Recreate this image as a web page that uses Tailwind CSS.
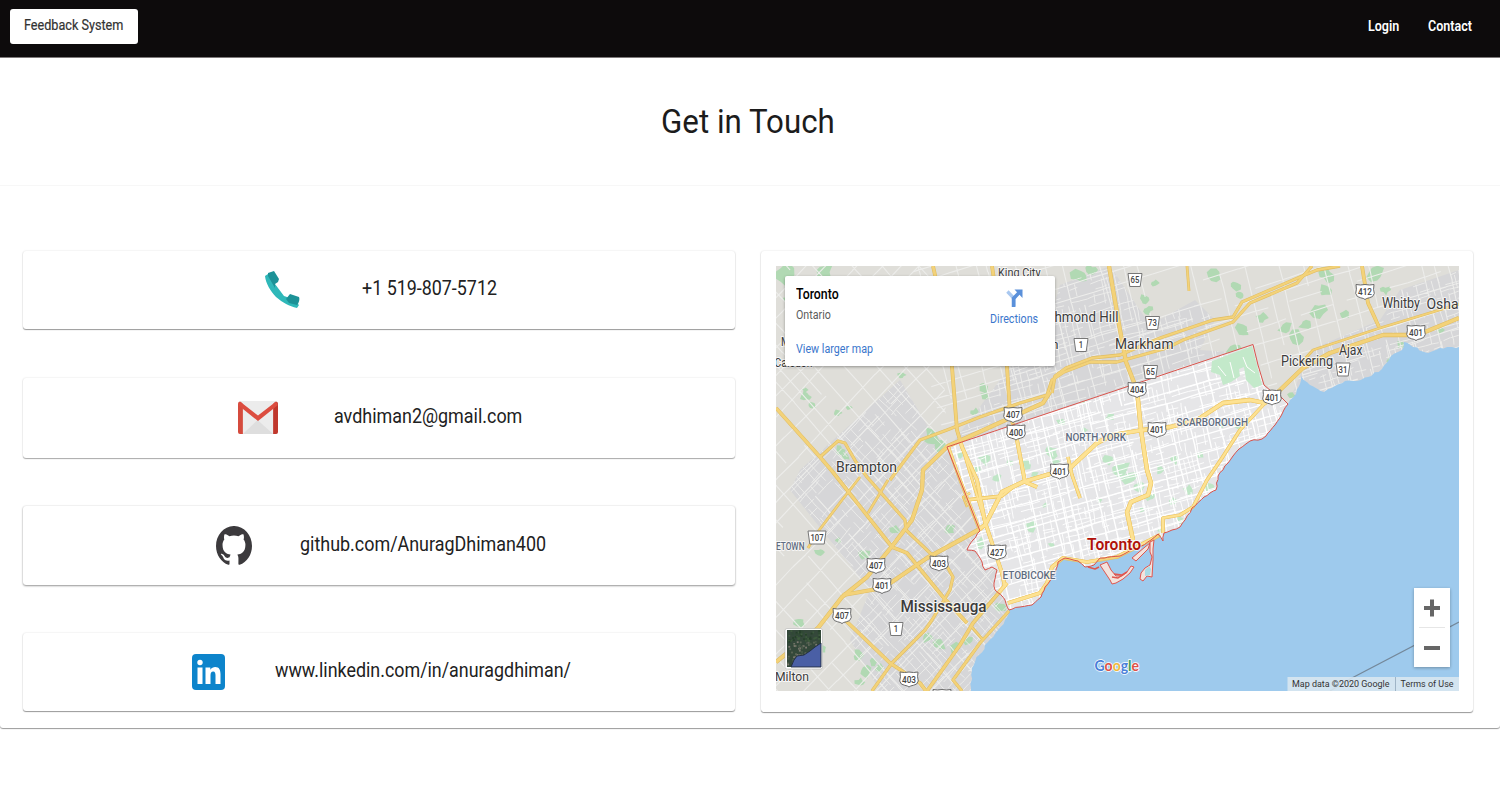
<!DOCTYPE html>
<html lang="en">
<head>
<meta charset="utf-8">
<title>Feedback System</title>
<script src="https://cdn.jsdelivr.net/npm/@tailwindcss/browser@4"></script>
</head>
<body class="h-[800px] overflow-hidden bg-white font-['Roboto',sans-serif] text-[#212121]">
<header class="flex h-[58px] items-start justify-between border-b border-[#7d797a] bg-[#0d0b0c] pl-[10px] pr-[28px] pt-[9px]">
  <a class="flex h-[35px] w-[128px] items-center rounded-[3px] bg-white pb-[3px] pl-[14px] text-sm text-[#333]"><span class="inline-block origin-left scale-x-[.902] whitespace-nowrap [-webkit-text-stroke:.2px_#333]">Feedback System</span></a>
  <nav class="flex h-[33px] items-center gap-[29px] text-sm font-semibold text-white">
    <a class="w-[31px]"><span class="inline-block origin-left scale-x-[.895] whitespace-nowrap">Login</span></a>
    <a class="w-[44px]"><span class="inline-block origin-left scale-x-[.895] whitespace-nowrap">Contact</span></a>
  </nav>
</header>
<main class="h-[670px] rounded-b-[3px] bg-white shadow-[0_1px_1px_#999]">
  <div class="flex h-[128px] items-center justify-center border-b border-[#f7f7f7]">
    <h1 class="-ml-[5px] w-[173px] text-[34px] text-[#1c1c1c]"><span class="inline-block origin-left scale-x-[.92] whitespace-nowrap">Get in Touch</span></h1>
  </div>
  <div class="flex gap-[26px] pl-[23px] pt-[65px]">
    <section class="flex w-[712px] flex-col text-[20px]">
      <div class="flex h-[78px] items-center rounded-[3px] pl-[242px] shadow-[0_1px_1px_#999,0_0_2px_#ddd]">
        <svg class="h-[38px] w-[35px]" viewBox="0 0 35 38"><path d="M3 3 0 5C1 13 5 19 11 26C18 32 24 35 32 37l2-3-6-6-9-3L10 13Z" fill="#2fb8b9"/><path d="m3 2 6-2 5 8-1 3-3 2v4L3 5Z" fill="#1c9297"/><path d="m21 28 4-5 9 3c1 2 0 6-2 8l-8-2Z" fill="#1c9297"/></svg>
        <div class="-mt-[4px] ml-[62px] w-[135px]"><span class="inline-block origin-left scale-x-[.894] whitespace-nowrap">+1 519-807-5712</span></div>
      </div>
      <div class="mt-[49px] flex h-[80px] items-center rounded-[3px] pl-[215px] shadow-[0_1px_1px_#aaa,0_0_2px_#ddd]">
        <svg class="-mt-[2px] h-[33px] w-[40px]" viewBox="0 0 41 33" preserveAspectRatio="none"><rect width="40" height="33" x=".5" rx="2" fill="#ececec"/><path d="M20 19 36 33H5Z" fill="#dedede"/><path d="M0 3q0-3 3-2l2 2v30H2q-2 0-2-2Z" fill="#d54b3d"/><path d="M41 3q0-3-3-2l-2 2v30h3q2 0 2-2Z" fill="#c0372c"/><path d="M2 .5 20.500 14.500 39 .5l2 3.500L20.500 20 0 4Z" fill="#dc4d40"/></svg>
        <div class="-mt-[5px] ml-[56px] w-[188px]"><span class="inline-block origin-left scale-x-[.896] whitespace-nowrap">avdhiman2@gmail.com</span></div>
      </div>
      <div class="mt-[48px] flex h-[79px] items-center rounded-[3px] pl-[193px] shadow-[0_1px_2px_#999,0_0_2px_#ddd]">
        <svg class="-mt-px h-[39px] w-[36px]" viewBox="0 .3 24 23.500" preserveAspectRatio="none"><path fill="#3c3a3d" d="M12 .297c-6.630 0-12 5.373-12 12 0 5.303 3.438 9.800 8.205 11.385.6.113.82-.258.82-.577 0-.285-.01-1.040-.015-2.040-3.338.724-4.042-1.610-4.042-1.610C4.422 18.070 3.633 17.700 3.633 17.700c-1.087-.744.084-.729.084-.729 1.205.084 1.838 1.236 1.838 1.236 1.070 1.835 2.809 1.305 3.495.998.108-.776.417-1.305.76-1.605-2.665-.3-5.466-1.332-5.466-5.930 0-1.310.465-2.380 1.235-3.220-.135-.303-.54-1.523.105-3.176 0 0 1.005-.322 3.300 1.230.96-.267 1.980-.399 3-.405 1.020.006 2.040.138 3 .405 2.280-1.552 3.285-1.230 3.285-1.230.645 1.653.24 2.873.12 3.176.765.84 1.230 1.910 1.230 3.220 0 4.610-2.805 5.625-5.475 5.920.42.36.81 1.096.81 2.220 0 1.606-.015 2.896-.015 3.286 0 .315.21.69.825.57C20.565 22.092 24 17.592 24 12.297c0-6.627-5.373-12-12-12"/></svg>
        <div class="-mt-[4px] ml-[48px] w-[246px]"><span class="inline-block origin-left scale-x-[.896] whitespace-nowrap">github.com/AnuragDhiman400</span></div>
      </div>
      <div class="mt-[48px] flex h-[78px] items-center rounded-[3px] pl-[169px] shadow-[0_1px_1px_#999,0_0_2px_#ddd]">
        <svg class="h-[36px] w-[33px]" viewBox="0 0 33 36"><rect width="33" height="36" rx="4" fill="#0d84cb"/><circle cx="8" cy="8.500" r="2.700" fill="#fff"/><path d="M5.500 13.500h5V30h-5zM13.500 13.500h4.800v2.300c1.200-2 3-2.800 4.900-2.800 4 0 5.300 2.800 5.300 7V30h-5v-8.500c0-2.300-.4-4-2.300-4s-2.700 1.500-2.700 4V30h-5z" fill="#fff"/></svg>
        <div class="-mt-[4px] ml-[50px] w-[296px]"><span class="inline-block origin-left scale-x-[.894] whitespace-nowrap">www.linkedin.com/in/anuragdhiman/</span></div>
      </div>
    </section>
    <section class="h-[461px] w-[712px] rounded-[3px] pl-[15px] pt-[15px] shadow-[0_1px_1px_#999,0_0_2px_#ddd]">
      <div class="relative h-[425px] w-[683px] overflow-hidden">
        <svg id="map" class="block h-[425px] w-[683px]" viewBox="776 266 683 425"></svg>
        <div class="absolute left-[9px] top-[10px] flex h-[90px] w-[270px] justify-between rounded-[2px] bg-white pl-[11px] pr-[17px] shadow-[0_1px_3px_rgba(0,0,0,.35)]">
          <div class="flex flex-col pt-[9px] text-xs">
            <b class="h-[21px] w-[43px] text-sm leading-[18px] font-medium text-black"><span class="inline-block origin-left scale-x-[.88] whitespace-nowrap">Toronto</span></b>
            <span class="h-[34px] w-[35px] leading-[18px] text-[#5b5b5b]"><span class="inline-block origin-left scale-x-[.89] whitespace-nowrap">Ontario</span></span>
            <a class="w-[77px] leading-[18px] text-[#3a76cc]"><span class="inline-block origin-left scale-x-[.893] whitespace-nowrap">View larger map</span></a>
          </div>
          <div class="flex w-[48px] flex-col items-center pt-[13px] text-xs text-[#3a76cc]">
            <svg class="h-[18px] w-[17px]" viewBox="0 0 18 18" preserveAspectRatio="none"><path d="m1.500 2.500 7 7v8" fill="none" stroke="#a9c8f0" stroke-width="3.500"/><path d="M8 18V9.500L14 3.500" fill="none" stroke="#5a90da" stroke-width="3.800"/><path d="M9 .5h8.500V9z" fill="#5a90da"/></svg>
            <a class="w-[48px] leading-[24px]"><span class="inline-block origin-left scale-x-[.893] whitespace-nowrap">Directions</span></a>
          </div>
        </div>
        <div class="absolute left-[638px] top-[322px] h-[79px] w-[36px] bg-white shadow-[0_1px_3px_rgba(0,0,0,.3)]">
          <svg class="h-[79px] w-[36px]" viewBox="0 0 36 79"><path d="M10 20h16M18 11.500v17M10 60h16" stroke="#666" stroke-width="4"/><path d="M5 39.500h26" stroke="#e6e6e6"/></svg>
        </div>
      </div>
    </section>
  </div>
</main>
<script>
const map = document.getElementById('map');
let seed = 11;
const rnd = () => (seed = (seed * 16807) % 2147483647) / 2147483647;
// Splits every long edge of a shoreline with small offsets
function rough(str, amp) {
  const p = str.split(' ').map(q => q.split(',').map(Number)), out = [p[0].join(',')];
  for (let i = 1; i < p.length; i++) {
    const [x0, y0] = p[i - 1], [x1, y1] = p[i], n = Math.max(1, Math.round(Math.hypot(x1 - x0, y1 - y0) / 4));
    for (let k = 1; k < n; k++) out.push((x0 + (x1 - x0) * k / n + (rnd() - 0.5) * amp).toFixed(1) + ',' + (y0 + (y1 - y0) * k / n + (rnd() - 0.5) * amp).toFixed(1));
    out.push(p[i].join(','));
  }
  return out.join(' ');
}
const CITY = '947,447 1253,344.5 1258,365 1264,385 1271,391 1281,397 1288,404';
const SHORE = rough('1288,404 1282,414 1275,425 1266,436 1262,439 1250,441 1239,449 1233,456 1228,463 1218,476 1216,490 1210,493 1204,497 1192,508 1185,520 1180,527 1172,530 1164,533 1163,541 1158,534 1151,540 1137,548 1120,556 1100,558 1094,565 1085,567 1078,561 1065,558 1058,562 1055,572 1050,581 1045,587 1041,597 1032,605 1020,607 1009,610', 1.2);
const WEST = rough('1009,610 1005,600 995,590 994,583 997,570 992,567 985,570 982,562 975,551 967,550 973,540 980,531', 1.8);
const EAST = rough('1459,347 1440,348 1428,353 1413,347 1404,342 1402,350 1391,356 1382,369 1368,377 1357,381 1345,381 1335,386 1324,392 1310,385 1301,376 1300,384 1296,394 1290,400', 2);
const city = CITY + ' ' + SHORE + ' ' + WEST;
const lake = EAST + ' ' + SHORE + ' ' + rough('1009,611 1005,620 998,630 988,642 979,655 972,668 971,691', 2) + ' 1459,691';
const urbanW = '800,470 850,425 900,380 930,430 947,447 980,531 1010,610 975,691 880,691 850,640 870,590 830,540 790,490';
const urbanN = '950,446 985,400 1000,380 1050,320 1060,285 1110,266 1150,325 1195,300 1215,320 1200,350 1230,352';
const urbanE = '1290,400 1310,350 1380,320 1400,290 1459,270 1459,347 1340,390';

function grid(cx, cy, R, a, b, step, prob, len) {
  let d = '';
  for (const [deg, k] of [[a, 1], [b, 1.1]]) {
    const r = deg * Math.PI / 180, c = Math.cos(r), s = Math.sin(r);
    for (let t = -R; t < R; t += step * k * (0.6 + rnd() * 0.8)) {
      let w = 0;
      for (let u = -R; u < R;) {
        const l = len * (0.5 + rnd()), w2 = w + (rnd() - 0.5) * 1.8;
        if (rnd() < prob) d += `M${(cx + u * c - (t + w) * s).toFixed(1)} ${(cy + u * s + (t + w) * c).toFixed(1)}L${(cx + (u + l) * c - (t + w2) * s).toFixed(1)} ${(cy + (u + l) * s + (t + w2) * c).toFixed(1)}`;
        u += l; w = w2 * 0.8;
      }
    }
  }
  return d;
}
function blob(x, y, r) {
  const p = [];
  for (let i = 0; i < 9; i++) { const q = i * Math.PI * 2 / 9, m = r * (0.5 + rnd() * 0.8); p.push((x + m * Math.cos(q)).toFixed(1) + ',' + (y + m * 0.9 * Math.sin(q)).toFixed(1)); }
  return `<polygon points="${p.join(' ')}"/>`;
}
const greensOut = [[785,275,12],[823,272,11],[790,300,6],[806,397,5],[812,405,4],[838,413,4],[849,408,3],[905,290,5],[932,437,10],[940,447,7],[983,386,6],[985,395,5],[840,450,5],[846,457,4],[902,375,4],[805,390,3],[1020,290,5],[1080,276,9],[1092,270,6],[1145,300,6],[1148,310,5],[1215,275,7],[1235,285,6],[1233,350,8],[1242,330,7],[1240,295,5],[1262,318,6],[1285,328,7],[1297,337,8],[1305,325,6],[1318,310,9],[1325,290,7],[1326,275,8],[1376,274,9],[1385,290,5],[1345,315,5],[1400,345,4],[1440,330,4],[1050,305,4],[895,530,5],[865,555,6],[820,552,5],[838,540,3],[927,638,6],[940,645,7],[955,648,6],[968,641,5],[858,655,6],[866,672,7],[880,668,5],[874,662,5],[860,682,5],[1000,607,6],[800,622,6],[950,530,6],[822,650,5],[1292,396,5],[1390,360,4],[975,412,4],[1155,283,4]];
const greensIn = [[1000,415,6],[985,460,6],[998,478,5],[1052,452,7],[1055,462,5],[1025,465,6],[1035,475,4],[1120,470,10],[1130,477,8],[1108,460,7],[1140,487,6],[1150,497,5],[1010,463,4],[980,543,6],[1032,526,6],[1052,545,4],[1110,417,5],[1160,470,5],[1175,460,5],[1200,455,4],[1210,487,5],[1172,502,5],[1188,490,5],[1180,520,4],[1080,400,5],[1062,422,5],[1142,510,3],[1240,425,5],[1222,425,4],[1160,530,3],[1025,573,4],[975,470,5],[1045,505,3],[1100,500,3],[960,455,4],[1085,430,3]];
const hw = [
 [3,'776,408 820,457 832,471 892,547 907,553 943,597 967,623'],[2.500,'820,457 838,441 845,443 856,462 867,477 905,520 906,530 930,553 945,563 953,577 950,590 932,620 925,630 892,663 872,691'],
 [3,'933,266 945,320 952,367 957,430 962,447 977,480 985,522 1002,573 1005,587'],[3,'992,266 1007,367 1010,413 1017,440 1025,482 1037,487'],[2,'1187,266 1189,291'],
 [3.500,'1109,266 1120,330 1126,362 1137,390 1141,430 1147,470 1151,483 1148,495 1131,502 1127,512 1133,540'],
 [2.500,'890,480 920,440 947,430 980,417 1020,403 1047,395 1052,380 1064,372 1090,362 1117,362 1167,348 1183,340 1233,322 1250,303 1297,283 1312,266'],
 [2.500,'1052,393 1055,376 1066,368 1092,358 1120,355 1160,338 1213,320 1233,317 1242,302 1300,277 1317,270 1340,266'],
 [3.500,'776,662 818,628 842,597 867,577 893,545 912,520 922,490 923,470 948,446 977,433 1043,403 1050,392'],
 [3.500,'843,595 883,588 927,558 960,540 978,530 985,525 1002,492 1023,482 1070,468 1097,443 1112,435 1143,430 1170,427 1197,420 1223,403 1250,400 1265,403 1280,390 1303,368 1330,353 1383,335 1407,335 1425,332 1459,318'],
 [2,'1303,361 1313,350 1380,328 1459,304'],[3,'1362,266 1368,303 1379,327'],[2.500,'1265,403 1240,430 1222,458 1207,480 1193,507 1180,515 1163,518 1163,533'],
 [3,'1008,603 1040,593 1047,583 1052,567 1063,558 1087,562 1117,557 1160,535'],[3,'1007,583 973,623 960,645 927,691'],[2.500,'1009,611 980,643 953,680 962,691'],[3,'842,617 890,663 920,683 926,691'],
 [2,'860,477 842,500 817,533 808,548'],[2,'888,480 868,513'],[2.500,'1068,457 1072,475 1080,498'],[2.500,'966,500 1002,496 1012,488'],[1.500,'967,507 963,497 970,493'],[2,'957,430 968,466 985,522'],[2,'970,625 983,640'],[2.500,'948,446 960,480 980,531']];
const road = (c, dw) => hw.map(([w, p]) => `<polyline points="${p}" stroke="${c}" stroke-width="${w + dw}"/>`).join('');
const T = (x, y, s, w, t, o = '') => `<text x="${x}" y="${y}" font-size="${s}" textLength="${w}" lengthAdjust="spacingAndGlyphs" ${o}>${t}</text>`;
const badge = ([x, y]) => `<path d="M${x-9} ${y-7.500}q4.500 1 9 0q4.500 1 9 0q-1 5 .3 9q-1 4-5 4.300q-2.800.4-4.300 1.700q-1.500-1.300-4.300-1.700q-4-.3-5-4.300q1.300-4 .3-9z" fill="#fff" stroke="#6b6b6b"/>`;
const shield = ([x, y, n]) => badge([x, y]) + T(x-7, y+3.200, 9, 14, n, 'fill="#444" font-family="Roboto" font-weight="500"');
const county = ([x, y, n]) => { const h = n.length === 3 ? 9 : 7, w = n.length * 4.400; return `<path d="M${x-h} ${y-6.500}h${2*h}l-1.800 13h${-2*h+3.600}z" fill="#fff" stroke="#777"/>` + T(x-w/2, y+3.200, 9, w, n, 'fill="#444" font-family="Roboto" font-weight="500"'); };

map.innerHTML = `
<defs><clipPath id="cc"><polygon points="${city}"/></clipPath><clipPath id="cw"><polygon points="${urbanW}"/></clipPath><clipPath id="cn"><polygon points="${urbanN}"/></clipPath><clipPath id="ce"><polygon points="${urbanE}"/></clipPath>
<clipPath id="sw"><path d="M776 266H940L947 447 1010 610V691H776z"/></clipPath><clipPath id="ne"><path d="M900 266H1459V420H1280L1253 344 947 447z"/></clipPath></defs>
<rect x="776" y="266" width="683" height="425" fill="#dfded9"/>
<g fill="#d6d6d8"><polygon points="${urbanW}"/><polygon points="${urbanN}"/><polygon points="${urbanE}"/></g>
<g fill="#b1d9b3">${greensOut.map(a => blob(...a)).join('')}</g>
<g fill="none" stroke="#ededeb" stroke-width="1.100">
<path clip-path="url(#sw)" d="${grid(870,480,300,48,-46,19,.85,30)}"/>
<path clip-path="url(#cw)" stroke-width=".9" d="${grid(900,560,200,47,-47,6.500,.6,11)}"/>
<path clip-path="url(#ne)" d="${grid(1200,320,320,-17,76,17,.8,26)}"/>
<path clip-path="url(#cn)" stroke-width=".9" d="${grid(1090,340,180,-16,78,6.500,.55,9)}"/>
<path clip-path="url(#ce)" stroke-width=".9" d="${grid(1380,340,130,-17,75,7,.55,9)}"/></g>
<polygon points="${city}" fill="#e6e6e8"/>
<g fill="#c0e6c7" clip-path="url(#cc)">${greensIn.map(a => blob(...a)).join('')}</g>
<g clip-path="url(#cc)" fill="none" stroke="#fff"><path stroke-width="1.400" d="${grid(1110,480,210,-16,77,13,.93,30)}"/><path stroke-width=".9" d="${grid(1110,480,210,-15,78,6,.55,9)}"/></g>
<path d="M1212 361l40-15 5 19 5 20-8 3-8-8-2-13-5 2 1 7-9 6-8 3-3-10-9-3z" fill="#c3e9ca"/><path d="M1230 362l4 16M1243 357l4 10 8 6M1218 366l8 10" fill="none" stroke="#fff"/>
<polygon points="${lake}" fill="#9ecaed"/>
<g fill="none" stroke-linejoin="round">${road('#e0bd62', .8)}${road('#f3d279', -.3)}
<g clip-path="url(#cc)">${road('#f2cb68', .8)}${road('#fde293', -.3)}</g></g>
<path d="M1459 622 1350 679 1330 691" fill="none" stroke="#74889a" stroke-width="1.300"/>
<polygon points="${city}" fill="none" stroke="#d9534c" stroke-linejoin="round"/>
<g fill="#f3e3dd" stroke="#e0564f" stroke-width="1" stroke-linejoin="round"><path d="M1100 565l7-3 4 8 5 6 6 0 5-4 4-6 3 1-4 6-7 6-7 4-4 1-2-4-4-6z"/><path d="M1132 558l13-11 5-4-2 6-12 12z"/><path d="M1150 542l4-2-1 9v11l-1 17-5-1-4 5-3-2 1-6 4-5 5-3 2-8-2-5z"/><path d="M1112 577l6 1 9-6M1114 574l8 1 5-3M1088 567l7 2 4-2" fill="none" stroke-width="1.500"/></g><path d="M1145 570l4-4 2 3-1 6-5 1z" fill="#a9dbe6"/>
${[[1013,415,'407'],[1016,432.500,'400'],[1137,390,'404'],[1272,397.500,'401'],[1157,430,'401'],[1059.500,471.500,'401'],[1365,292,'412'],[1416,333,'401'],[997,552.500,'427'],[939,563.500,'403'],[876,566,'407'],[882,586,'401'],[842,616,'407'],[909,679.500,'403']].map(shield).join('')}${badge([942,697])}
${[[1135,280,'65'],[1152.500,323,'73'],[1150.500,372,'65'],[1343,369.500,'31'],[1081,345,'1'],[896,629,'1'],[817,537.500,'107']].map(county).join('')}
<g font-family="Roboto" fill="#3c3c3c" paint-order="stroke" stroke="#fff" stroke-opacity=".75" stroke-width="2" stroke-linejoin="round">
${T(998,276.500,12,42.500,'King City')}${T(1054.500,322,14.500,64,'hmond Hill')}${T(1115,348.500,14.500,58.500,'Markham')}${T(1382,307.500,14,38,'Whitby')}${T(1426.500,308.500,14.500,32,'Osha')}
${T(1281,366,14.500,52,'Pickering')}${T(1339,354.500,14.500,23.500,'Ajax')}${T(836,471.500,15,61,'Brampton')}${T(900.500,612,17,86,'Mississauga','font-weight="500"')}${T(775,681,13.500,34,'Milton')}${T(774.500,367,12,38,'Caledon')}${T(1051.500,348.500,13,7,'n')}${T(781,346,12,9,'M')}
<g fill="#5f6c80" font-weight="500">${T(1065.500,441,11,60.500,'NORTH YORK')}${T(1176.500,426,11,71.500,'SCARBOROUGH')}${T(1002.500,579,11,53,'ETOBICOKE')}${T(776,549.500,10,28.500,'ETOWN')}</g>
${T(1087,549.500,17,54,'Toronto','font-weight="600" style="fill:#b0120a"')}</g>
<text x="1094.500" y="671" font-family="Lato" font-size="16" font-weight="700" textLength="44.500" lengthAdjust="spacingAndGlyphs" paint-order="stroke" stroke="#fff" stroke-width="1.600"><tspan fill="#4a80d9">G</tspan><tspan fill="#dc5148">o</tspan><tspan fill="#eeb83d">o</tspan><tspan fill="#4a80d9">g</tspan><tspan fill="#3d9f58">l</tspan><tspan fill="#dc5148">e</tspan></text>
<rect x="1287.500" y="677" width="171.500" height="14" fill="#dbe7f0" fill-opacity=".88"/><path d="M1395.500 677v14" stroke="#9fb4c6"/>
<g font-family="Roboto">${T(1292,687,9,97.500,'Map data ©2020 Google','fill="#333"')}${T(1400.500,687,9,53,'Terms of Use','fill="#333"')}</g>
<rect x="785" y="628.500" width="37.500" height="40.500" rx="2" fill="#fff" stroke="#aaa" stroke-opacity=".5"/><rect x="787" y="630" width="34" height="37" fill="#34483a"/>
<g>${Array.from({length: 130}, () => { const y = 630 + rnd() * 34; return `<rect x="${(787 + rnd()*32).toFixed(1)}" y="${y.toFixed(1)}" width="1.800" height="1.800" fill="${(y < 641 ? ['#26402a','#2f4a33','#3d5a3c'] : ['#4a5a49','#7d7a70','#5d6657'])[Math.floor(rnd()*3)]}"/>`; }).join('')}</g>
<path d="M821 643v24H791l3-7 3-4 7-1 6-4 5-4z" fill="#4a5fa5" stroke="#1f2b40" stroke-width=".9"/>
`;
</script>
</body>
</html>
